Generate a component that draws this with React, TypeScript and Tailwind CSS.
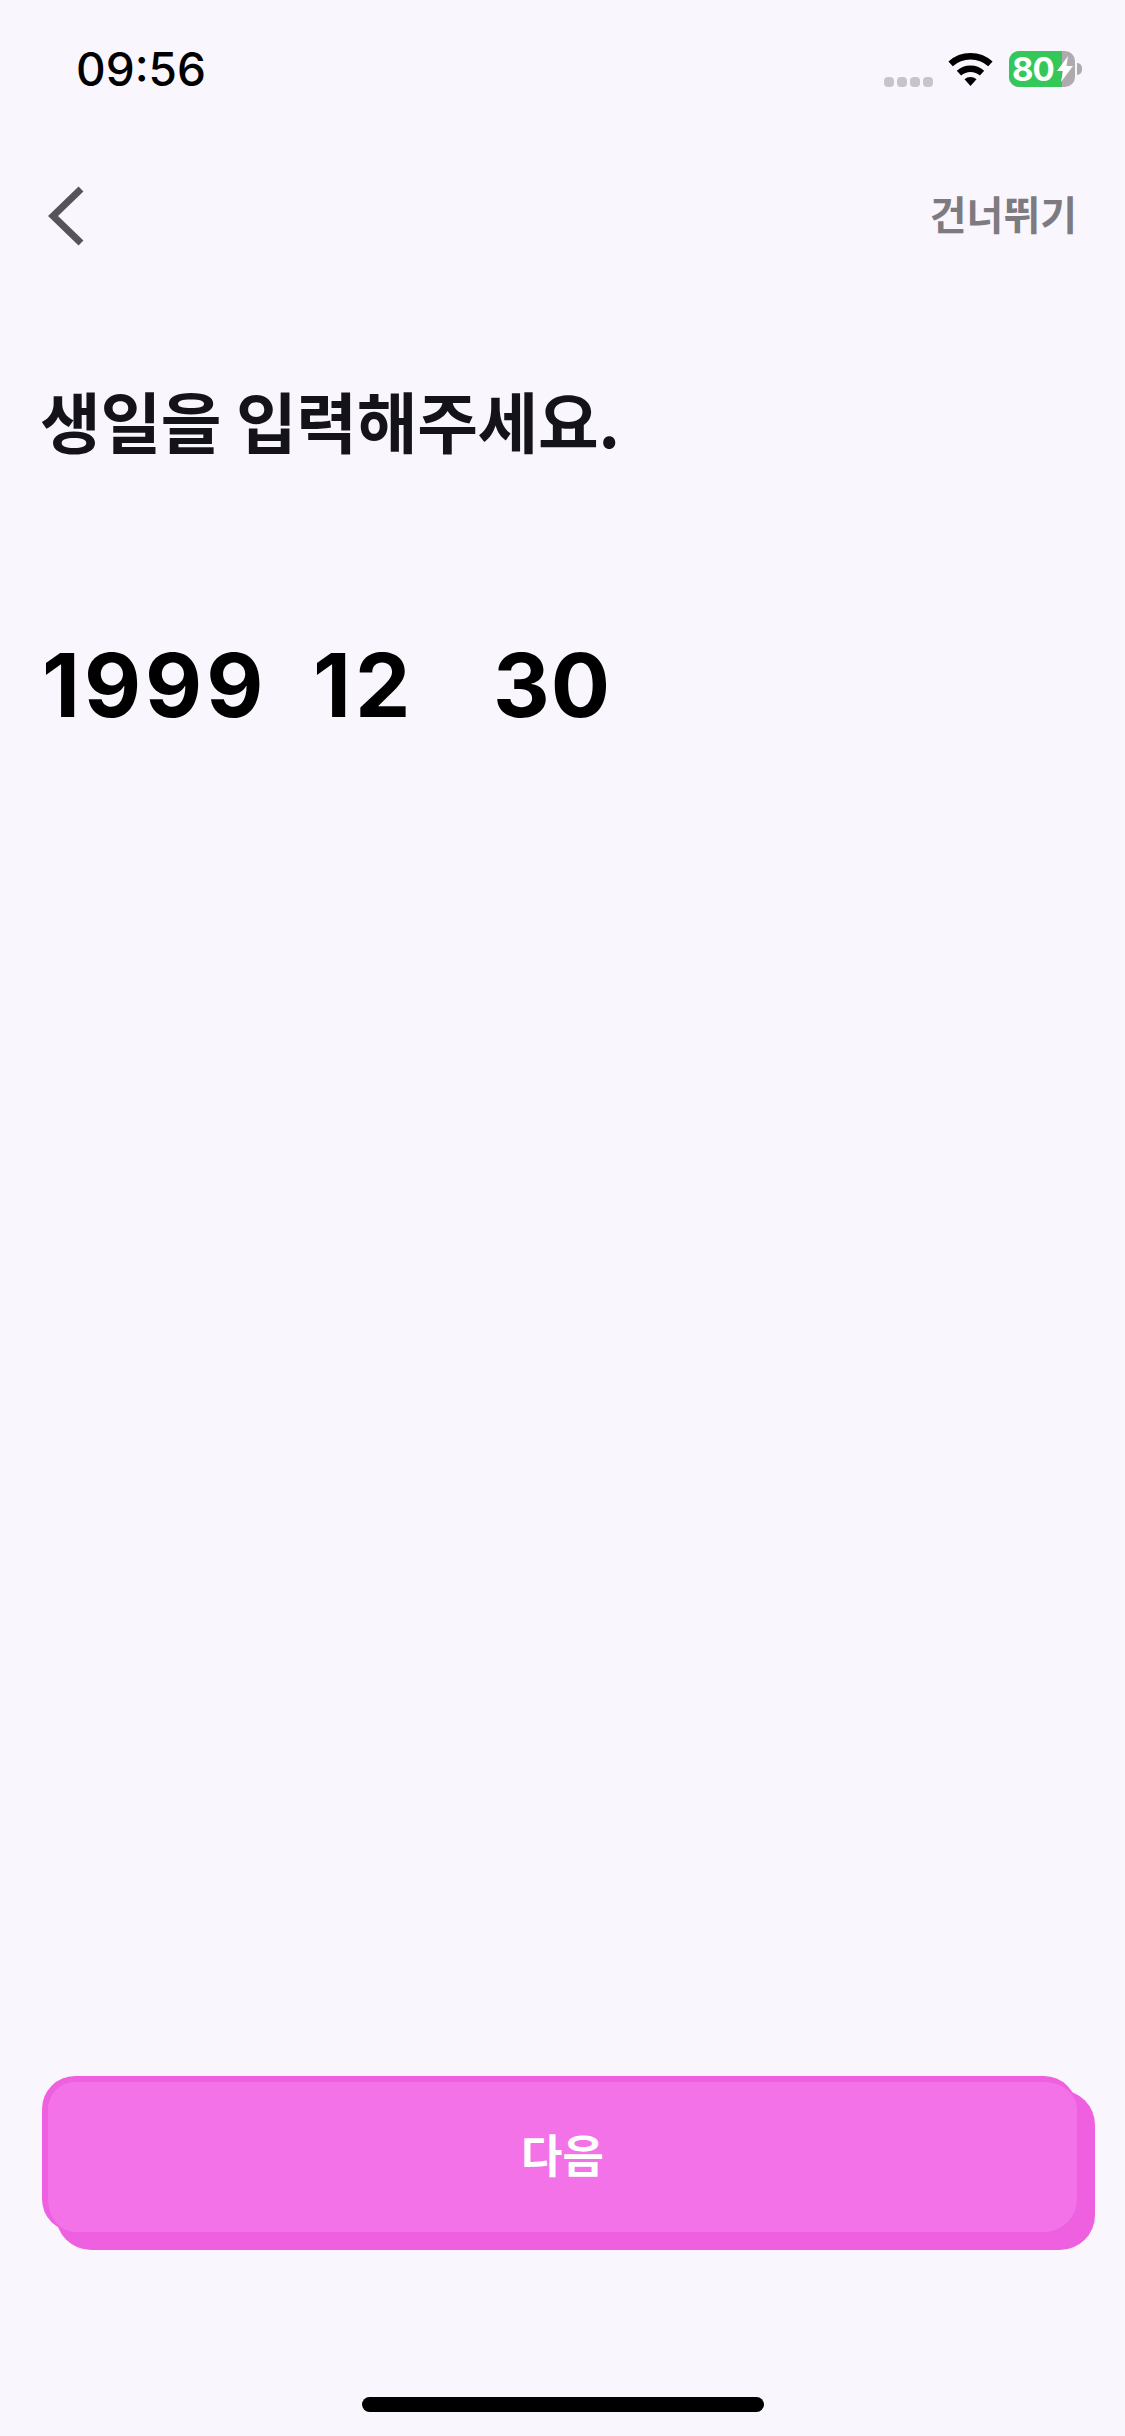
export default function App() {
  const kr = "font-['Noto_Sans_CJK_KR',sans-serif]";
  return (
    <div className="flex h-[2436px] w-[1125px] flex-col overflow-hidden bg-[#faf6fd]">
      {/* status bar */}
      <div className="mt-[51px] flex h-[36px] items-center justify-between pl-[76px] pr-[43px]">
        <span className="font-['Inter',sans-serif] text-[46px] font-medium leading-[36px] tracking-[0px] text-black">09:56</span>
        <div className="flex items-center">
          <div className="mt-[25px] flex gap-[3px]">
            <span className="h-[10px] w-[10px] rounded-[4px] bg-[#c7c5ca]"></span>
            <span className="h-[10px] w-[10px] rounded-[4px] bg-[#c7c5ca]"></span>
            <span className="h-[10px] w-[10px] rounded-[4px] bg-[#c7c5ca]"></span>
            <span className="h-[10px] w-[10px] rounded-[4px] bg-[#c7c5ca]"></span>
          </div>
          <svg className="ml-[15px]" width="45" height="33" viewBox="0 0 45 33" fill="none">
            <path d="M2.6 10.9A29.75 29.75 0 0 1 42.4 10.9" stroke="#000" strokeWidth="6.5" />
            <path d="M10.96 20.18A17.25 17.25 0 0 1 34.04 20.18" stroke="#000" strokeWidth="6.5" />
            <path d="M22.5 33L16.5 26.3A9 9 0 0 1 28.5 26.3Z" fill="#000" />
          </svg>
          <div className="relative ml-[16px] flex h-[36px] w-[66px] rounded-[10px] bg-[#aeaaae]">
            <div className="h-full w-[53px] rounded-l-[10px] bg-[#34c759]"></div>
            <span className="absolute left-[3px] top-0 font-['Inter',sans-serif] text-[33px] font-bold leading-[36px] tracking-[-1px] text-white">80</span>
            <svg className="absolute left-[48px] top-[5px]" width="16" height="26" viewBox="0 0 16 26">
              <path d="M11 0L0 15H6L4 26L16 10H9.5Z" fill="#fff" />
            </svg>
          </div>
          <div className="ml-[2px] h-[12px] w-[5px] rounded-r-[6px] bg-[#aeaaae]"></div>
        </div>
      </div>

      {/* nav */}
      <div className="mt-[95px] flex h-[68px] items-center justify-between pl-[48px] pr-[48px]">
        <svg width="36" height="60" viewBox="0 0 36 60" fill="none">
          <path d="M33 3L5 30L33 57" stroke="#56545a" strokeWidth="7" />
        </svg>
        <span className={`${kr} -mt-[6px] text-[40px] font-bold leading-[68px] text-[#7d7b80]`}>건너뛰기</span>
      </div>

      {/* heading */}
      <h1 className={`${kr} ml-[40px] mt-[124px] text-[66px] font-bold leading-[90px] tracking-[-0.3px] text-[#15131a]`}>생일을 입력해주세요.</h1>

      {/* date */}
      <div className="ml-[42px] mt-[171px] flex font-['Inter',sans-serif] text-[88px] font-bold leading-[100px] text-black">
        <span className="w-[271px] tracking-[4px]">1999</span>
        <span className="w-[180px] tracking-[4px]">12</span>
        <span className="tracking-[1px]">30</span>
      </div>

      {/* button */}
      <div className="mt-auto px-[42px] pb-[165px]">
        <button className={`${kr} flex h-[156px] w-[1035px] items-center justify-center rounded-[33px] border-l-[6px] border-t-[6px] border-[#ee60e0] bg-[#f472e8] pb-[6px] text-[45px] font-bold text-white shadow-[16px_16px_0_2px_#ee60e0]`}>
          다음
        </button>
      </div>

      {/* home indicator */}
      <div className="mb-[24px] flex justify-center">
        <div className="h-[15px] w-[402px] rounded-full bg-black"></div>
      </div>
    </div>
  );
}
